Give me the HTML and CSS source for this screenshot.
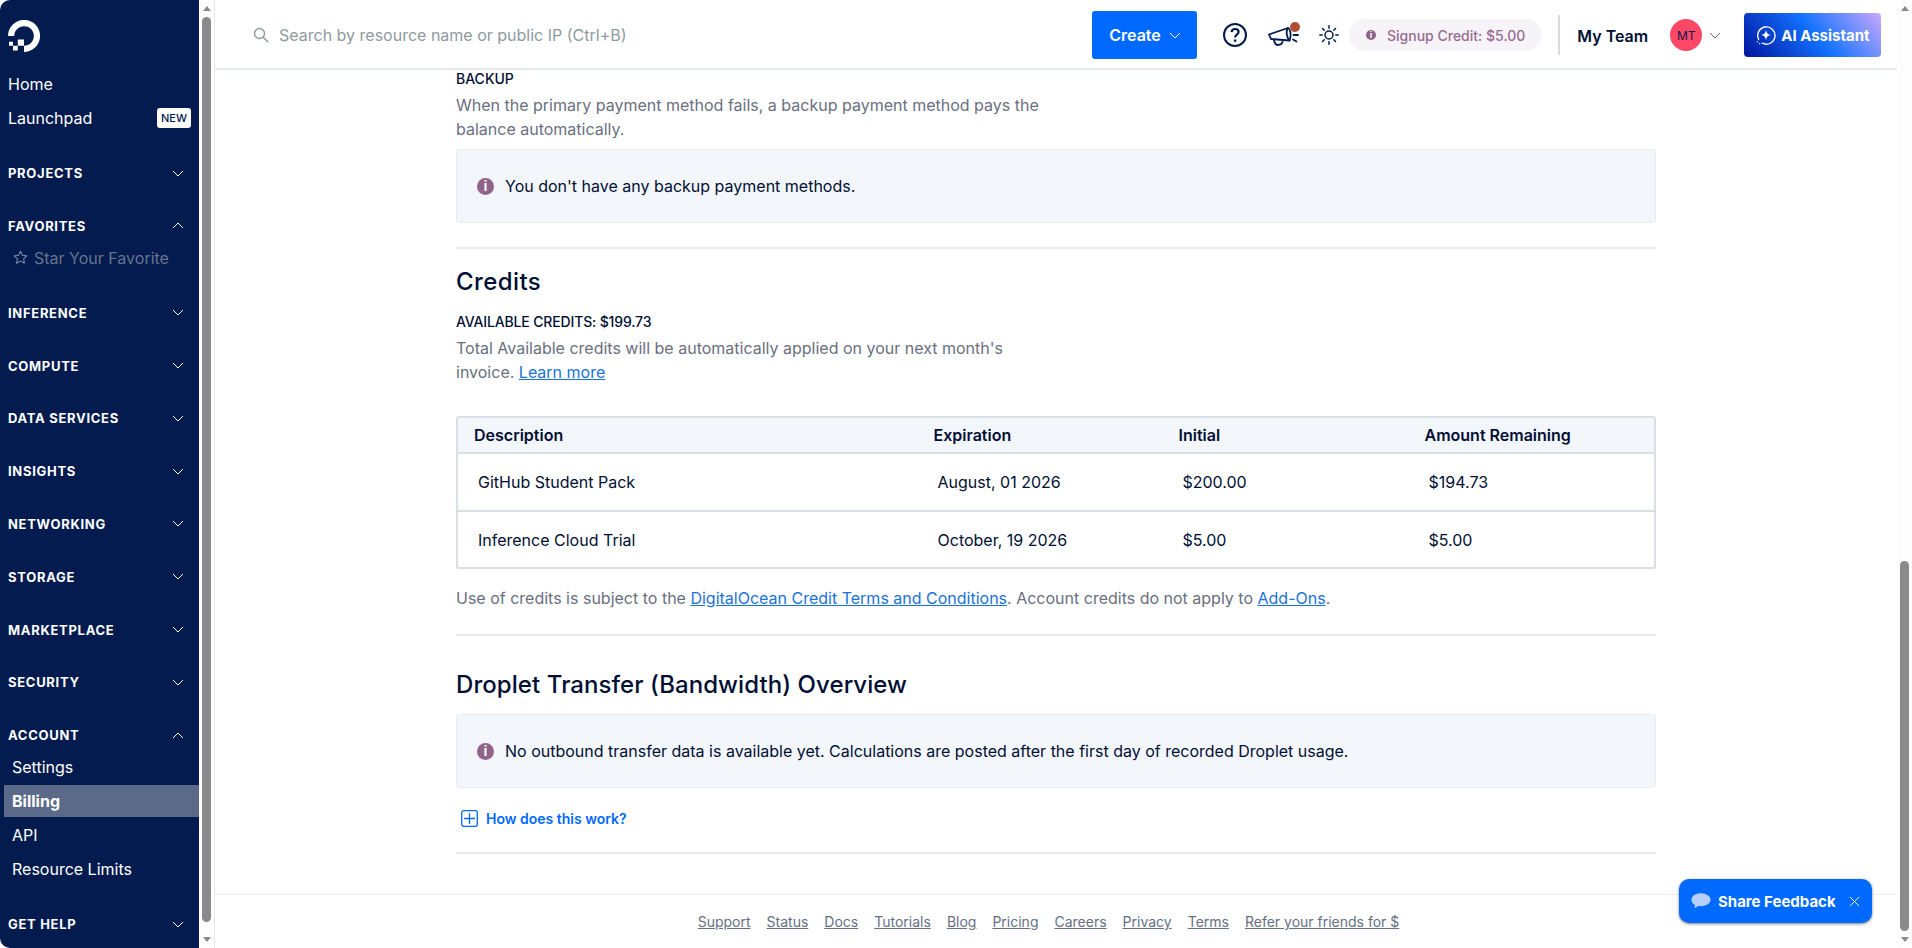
FILE: index.html
```html
<!DOCTYPE html>
<html lang="en">
<head>
    <meta charset="UTF-8">
    <title>Billing</title>
    <link rel="stylesheet" href="styles.css">
</head>
<body>
    <aside class="sidebar">
        <svg class="logo" viewBox="0 0 32 32" width="32" height="32">
            <path d="M16 32v-6.2c6.6 0 11.7-6.5 9.2-13.4-.9-2.6-3-4.600-5.600-5.600C12.700 4.300 6.200 9.400 6.200 16H0C0 5.500 10.100-2.700 21.100.7c4.800 1.500 8.700 5.300 10.200 10.200C34.700 21.900 26.500 32 16 32z" fill="#fff"/>
            <path d="M16 25.800H9.800V19.600H16zM9.800 30.600H5V25.800h4.800zM5 25.800H1V21.800h4z" fill="#fff"/>
        </svg>
        <a class="nav-top">Home</a>
        <a class="nav-top">Launchpad <span class="new-tag">NEW</span></a>

        <div class="nav-head first">PROJECTS <svg class="chev" viewBox="0 0 12 7"><path d="M1 1l5 5 5-5"/></svg></div>
        <div class="nav-head">FAVORITES <svg class="chev" viewBox="0 0 12 7"><path d="M1 6l5-5 5 5"/></svg></div>
        <a class="nav-sub muted">
            <svg class="star" viewBox="0 0 14 14" width="15" height="15" fill="none" stroke="#7d8aa6" stroke-width="1" stroke-linejoin="round"><path d="M7 1.200l1.800 3.700 4 .6-2.900 2.800.7 4L7 10.400l-3.600 1.900.7-4L1.200 5.500l4-.6z"/></svg>
            Star Your Favorite
        </a>
        <div class="nav-head after-sub">INFERENCE <svg class="chev" viewBox="0 0 12 7"><path d="M1 1l5 5 5-5"/></svg></div>
        <div class="nav-head">COMPUTE <svg class="chev" viewBox="0 0 12 7"><path d="M1 1l5 5 5-5"/></svg></div>
        <div class="nav-head">DATA SERVICES <svg class="chev" viewBox="0 0 12 7"><path d="M1 1l5 5 5-5"/></svg></div>
        <div class="nav-head">INSIGHTS <svg class="chev" viewBox="0 0 12 7"><path d="M1 1l5 5 5-5"/></svg></div>
        <div class="nav-head">NETWORKING <svg class="chev" viewBox="0 0 12 7"><path d="M1 1l5 5 5-5"/></svg></div>
        <div class="nav-head">STORAGE <svg class="chev" viewBox="0 0 12 7"><path d="M1 1l5 5 5-5"/></svg></div>
        <div class="nav-head">MARKETPLACE <svg class="chev" viewBox="0 0 12 7"><path d="M1 1l5 5 5-5"/></svg></div>
        <div class="nav-head">SECURITY <svg class="chev" viewBox="0 0 12 7"><path d="M1 1l5 5 5-5"/></svg></div>
        <div class="nav-head">ACCOUNT <svg class="chev" viewBox="0 0 12 7"><path d="M1 6l5-5 5 5"/></svg></div>
        <a class="nav-sub">Settings</a>
        <a class="nav-sub active">Billing</a>
        <a class="nav-sub">API</a>
        <a class="nav-sub">Resource Limits</a>
        <div class="nav-head after-sub">GET HELP <svg class="chev" viewBox="0 0 12 7"><path d="M1 1l5 5 5-5"/></svg></div>
    </aside>

    <div class="scrollbar side-scroll">
        <span class="arrow up"></span>
        <span class="track"><span class="thumb"></span></span>
        <span class="arrow down"></span>
    </div>

    <div class="main">
        <header class="topbar">
            <div class="search">
                <svg viewBox="0 0 16 16" width="16" height="16" fill="none" stroke="#8e9a9e" stroke-width="1.4"><circle cx="6.500" cy="6.500" r="5"/><path d="M10.200 10.200l5 5"/></svg>
                Search by resource name or public IP (Ctrl+B)
            </div>
            <button class="create">Create <svg class="chev" viewBox="0 0 12 7"><path d="M1 1l5 5 5-5"/></svg></button>
            <svg class="help" viewBox="0 0 24 24" width="24" height="24" fill="none" stroke="#031b4e" stroke-width="2"><circle cx="12" cy="12" r="11"/><path d="M8.600 9.200c.2-2 1.700-3.200 3.500-3.200 2 0 3.500 1.300 3.500 3 0 2.600-3.500 2.800-3.500 5.400" stroke-width="2.200"/><path d="M12.100 16.500v2.300" stroke-width="2.400"/></svg>
            <span class="announce">
                <svg viewBox="0 0 32 24" width="32" height="24" fill="none" stroke="#031b4e" stroke-width="1.800" stroke-linejoin="round" stroke-linecap="round"><path d="M1 11.500l19-6.500c2.500 1 3.500 8 1.500 12.500L3 16z"/><path d="M6 17c.5 3 1.500 5 4 5 2.500 0 4-1.200 4.600-3.200"/><path d="M20 5c-2 2-2 9 1.500 12.500"/><path d="M25 7.500l4-1M25.500 12h4.500M25 16.500l3.500 2"/></svg>
                <span class="dot"></span>
            </span>
            <svg class="sun" viewBox="0 0 20 20" width="20" height="20" fill="none" stroke="#031b4e" stroke-width="1.500" stroke-linecap="round"><circle cx="10" cy="10" r="4"/><path d="M10 .8v2.400M10 16.800v2.400M.8 10h2.400M16.800 10h2.400M3.500 3.500l1.700 1.700M14.800 14.800l1.700 1.700M3.500 16.500l1.700-1.700M14.800 5.200l1.700-1.700"/></svg>
            <span class="credit-pill"><span class="info small">i</span> Signup Credit: $5.00</span>
            <span class="divider"></span>
            <span class="team">My Team</span>
            <span class="avatar">MT</span>
            <svg class="chev dark" viewBox="0 0 12 7"><path d="M1 1l5 5 5-5"/></svg>
            <button class="ai">
                <svg viewBox="0 0 22 22" width="20" height="20" fill="none" stroke="#fff" stroke-width="1.500"><path d="M3 16A9.500 9.500 0 1 1 7 20" stroke-linecap="round"/><path d="M11 5.500c.5 3.300 2 5 5.500 5.500-3.500.5-5 2.200-5.500 5.500-.5-3.300-2-5-5.500-5.500 3.500-.5 5-2.200 5.500-5.500z" fill="#fff" stroke="none"/><path d="M1.500 18.500h.1M4 20.500h.1" stroke-linecap="round"/></svg>
                AI Assistant
            </button>
        </header>

        <div class="content">
            <section class="wrap">
                <h4 class="label">BACKUP</h4>
                <p class="desc">When the primary payment method fails, a backup payment method pays the balance automatically.</p>
                <div class="notice"><span class="info">i</span> You don't have any backup payment methods.</div>
                <hr class="rule">

                <h2 class="credits-title">Credits</h2>
                <h4 class="label tight">AVAILABLE CREDITS: $199.73</h4>
                <p class="desc">Total Available credits will be automatically applied on your next month's invoice. <a href="#">Learn more</a></p>

                <div class="table">
                    <div class="row head"><span>Description</span><span>Expiration</span><span>Initial</span><span>Amount Remaining</span></div>
                    <div class="row"><span>GitHub Student Pack</span><span>August, 01 2026</span><span>$200.00</span><span>$194.73</span></div>
                    <div class="row"><span>Inference Cloud Trial</span><span>October, 19 2026</span><span>$5.00</span><span>$5.00</span></div>
                </div>

                <p class="terms">Use of credits is subject to the <a href="#">DigitalOcean Credit Terms and Conditions</a>. Account credits do not apply to <a href="#">Add-Ons</a>.</p>
                <hr class="rule rule-two">

                <h2 class="transfer-title">Droplet Transfer (Bandwidth) Overview</h2>
                <div class="notice"><span class="info">i</span> No outbound transfer data is available yet. Calculations are posted after the first day of recorded Droplet usage.</div>
                <div class="how">
                    <svg viewBox="0 0 17 17" width="17" height="17" fill="none" stroke="#0069ff" stroke-width="1.300"><rect x=".7" y=".7" width="15.600" height="15.600" rx="2"/><path d="M8.500 3v11M3 8.500h11"/></svg>
                    How does this work?
                </div>
                <hr class="rule rule-three">
            </section>

            <footer class="footer">
                <a>Support</a><a>Status</a><a>Docs</a><a>Tutorials</a><a>Blog</a><a>Pricing</a><a>Careers</a><a>Privacy</a><a>Terms</a><a>Refer your friends for $</a>
            </footer>
        </div>
    </div>

    <div class="scrollbar page-scroll">
        <span class="arrow up"></span>
        <span class="track"><span class="thumb"></span></span>
        <span class="arrow down"></span>
    </div>

    <div class="feedback">
        <svg viewBox="0 0 22 18" width="20" height="17"><path d="M11 0C5 0 .5 3 .5 7.200c0 2.400 1.500 4.400 3.800 5.700l-.5 3.600 4.400-2.600c.9.1 1.800.2 2.800.2 6 0 10.500-3 10.500-6.900S17 0 11 0z" fill="#b5d0fb"/></svg>
        Share Feedback
        <svg class="close" viewBox="0 0 12 12" width="11" height="11" fill="none" stroke="#fff" stroke-width="1"><path d="M1 1l10 10M11 1L1 11"/></svg>
    </div>
</body>
</html>
```

FILE: styles.css
```css
* {
    margin: 0;
    padding: 0;
    box-sizing: border-box;
}

html, body {
    height: 100%;
    overflow: hidden;
}

body {
    font-family: Inter, "Liberation Sans", sans-serif;
    background-color: #fff;
    color: #031b4e;
    display: flex;
    font-size: 16px;
}

a {
    color: inherit;
}

/* sidebar */
.sidebar {
    width: 199px;
    flex: none;
    height: 948px;
    background-color: #031b4e;
    color: #fff;
    border-radius: 10px 0 0 10px;
    padding-top: 20px;
}

.logo {
    display: block;
    margin-left: 8px;
    margin-bottom: 15px;
}

.nav-top {
    display: flex;
    align-items: center;
    justify-content: space-between;
    height: 34px;
    padding: 0 8px;
    font-size: 16px;
}

.new-tag {
    background-color: #fff;
    color: #031b4e;
    font-size: 11px;
    font-weight: 500;
    padding: 3px 4px;
    border-radius: 3px;
    line-height: 14px;
}

.nav-head {
    display: flex;
    align-items: center;
    justify-content: space-between;
    height: 20px;
    margin-top: 32.8px;
    padding: 0 15px 0 8px;
    font-size: 13px;
    font-weight: 700;
    letter-spacing: 0.7px;
}

.nav-head.first {
    margin-top: 28px;
}

.nav-head.after-sub {
    margin-top: 28px;
}

.nav-sub {
    display: flex;
    align-items: center;
    height: 34px;
    margin-left: 4px;
    padding-left: 8px;
    font-size: 16px;
}

.nav-head + .nav-sub {
    margin-top: 5px;
}

.nav-sub.muted {
    color: #66758f;
}

.star {
    flex: none;
    margin: 0 6px 0 1px;
}

.nav-sub.active {
    height: 32px;
    margin-top: 1px;
    margin-bottom: 1px;
    background-color: #5b6a88;
    font-weight: 700;
}

.chev {
    width: 12px;
    height: 7px;
    fill: none;
    stroke: #fff;
    stroke-width: 1;
}

.chev.dark {
    stroke: #5b6a88;
}

/* scrollbars */
.scrollbar {
    width: 16px;
    flex: none;
    height: 948px;
    display: flex;
    flex-direction: column;
    align-items: center;
    background-color: #fff;
}

.side-scroll {
    border-right: 1px solid #e5e8ed;
}

.page-scroll {
    width: 15px;
    background-color: #fdfdfd;
}

.track {
    flex: 1;
    width: 100%;
    display: flex;
    flex-direction: column;
    align-items: center;
}

.arrow {
    width: 0;
    height: 0;
    margin: 6px 0;
    border-left: 4px solid transparent;
    border-right: 4px solid transparent;
}

.arrow.up {
    border-bottom: 5px solid #8a8a8a;
}

.arrow.down {
    border-top: 5px solid #8a8a8a;
}

.thumb {
    width: 9px;
    background-color: #8a8a8a;
    border-radius: 5px;
}

.side-scroll .thumb {
    height: 905px;
}

.page-scroll .track {
    justify-content: flex-end;
}

.page-scroll .thumb {
    height: 370px;
}

/* top bar */
.main {
    flex: 1;
    min-width: 0;
    height: 948px;
    overflow: hidden;
    display: flex;
    flex-direction: column;
}

.topbar {
    flex: none;
    height: 70px;
    padding-top: 2px;
    padding-left: 38px;
    border-bottom: 2px solid #e5e8ed;
    display: flex;
    align-items: center;
}

.search {
    display: flex;
    align-items: center;
    gap: 10px;
    width: 839px;
    font-size: 16px;
    color: #8e9a9e;
}

.create {
    width: 105px;
    height: 48px;
    padding-left: 1px;
    background-color: #0069ff;
    color: #fff;
    border: none;
    border-radius: 3px;
    font-family: inherit;
    font-size: 16px;
    font-weight: 600;
    display: flex;
    align-items: center;
    justify-content: center;
    gap: 8px;
}

.help {
    margin-left: 26px;
}

.announce {
    position: relative;
    display: block;
    height: 24px;
    margin-left: 21px;
}

.dot {
    position: absolute;
    top: -1px;
    right: 0;
    width: 10px;
    height: 10px;
    border-radius: 50%;
    background-color: #ae4f34;
}

.sun {
    margin-left: 19px;
}

.credit-pill {
    display: flex;
    align-items: center;
    gap: 11px;
    height: 32px;
    margin-left: 10px;
    padding: 0 17px;
    border-radius: 16px;
    background-color: #f6f4f9;
    color: #986b91;
    font-size: 14px;
    font-weight: 500;
}

.info {
    flex: none;
    display: inline-flex;
    align-items: center;
    justify-content: center;
    width: 17px;
    height: 17px;
    border-radius: 50%;
    background-color: #90648a;
    color: #fff;
    font-size: 14px;
    font-weight: 700;
    font-family: "Liberation Sans", sans-serif;
}

.info.small {
    width: 10px;
    height: 10px;
    font-size: 9px;
}

.divider {
    width: 2px;
    height: 40px;
    margin-left: 16px;
    background-color: #d5dadd;
}

.team {
    margin-left: 17px;
    margin-top: 2px;
    font-size: 16px;
    font-weight: 600;
    color: #000f33;
}

.avatar {
    display: flex;
    align-items: center;
    justify-content: center;
    width: 32px;
    height: 32px;
    margin-left: 22px;
    border-radius: 50%;
    background-color: #ff4766;
    font-size: 12px;
    color: #031b4e;
}

.avatar + .chev {
    margin-left: 7px;
}

.ai {
    display: flex;
    align-items: center;
    gap: 5px;
    width: 137px;
    height: 44px;
    margin-left: 23px;
    padding-left: 12px;
    border: none;
    border-radius: 4px;
    background: linear-gradient(50deg, #00149e 0%, #1272ff 52%, #c9a9fb 100%);
    color: #fff;
    font-family: inherit;
    font-size: 15px;
    font-weight: 700;
}

/* content */
.content {
    flex: 1;
    overflow: hidden;
}

.wrap {
    width: 1200px;
    margin-left: 241px;
}

.label {
    font-size: 14px;
    font-weight: 500;
    line-height: 18px;
    color: #000f33;
}

.label.tight {
    letter-spacing: -0.15px;
}

.desc {
    width: 600px;
    margin-top: 5px;
    font-size: 16px;
    line-height: 24px;
    color: #6a7080;
}

.desc a, .terms a {
    color: #1a73d9;
    text-decoration: underline;
}

.notice {
    display: flex;
    align-items: center;
    gap: 11px;
    height: 74px;
    margin-top: 8px;
    padding-left: 20px;
    background-color: #f3f6fb;
    border: 1px solid #e9edf2;
    border-radius: 3px;
    font-size: 16px;
    color: #000f33;
}

.rule {
    border: none;
    height: 2px;
    margin-top: 24px;
    background-color: #ecedef;
}

h2 {
    font-size: 24px;
    font-weight: 500;
    color: #000f33;
}

.credits-title {
    margin-top: 17px;
    line-height: 32px;
    letter-spacing: 0.4px;
}

.credits-title + .label {
    margin-top: 15px;
}

.table {
    margin-top: 32px;
    border: 2px solid #d9dfe2;
    border-radius: 3px;
}

.row {
    display: grid;
    grid-template-columns: 459.5px 245px 246px 1fr;
    height: 58px;
    align-items: center;
    padding-left: 20px;
    font-size: 16px;
    color: #000f33;
    border-top: 2px solid #d9dfe2;
}

.row:last-child {
    height: 57px;
}

.row.head {
    height: 34px;
    padding-left: 16px;
    background-color: #f3f6fb;
    border-top: none;
    font-weight: 600;
}

.terms {
    margin-top: 17px;
    font-size: 16px;
    line-height: 24px;
    color: #6a7080;
}

.rule-two {
    margin-top: 24px;
}

.transfer-title {
    margin-top: 33px;
    line-height: 32px;
    letter-spacing: 0.07px;
}

.transfer-title + .notice {
    margin-top: 13px;
}

.how {
    display: flex;
    align-items: center;
    gap: 8px;
    margin-top: 22px;
    padding-left: 5px;
    font-size: 14px;
    font-weight: 600;
    color: #0069ff;
}

.rule-three {
    margin-top: 25px;
}

.footer {
    display: flex;
    justify-content: center;
    gap: 16px;
    height: 54px;
    margin-top: 40px;
    padding-top: 18px;
    padding-right: 15px;
    border-top: 1px solid #ecedef;
    font-size: 14px;
    color: #667085;
}

.footer a {
    text-decoration: underline;
}

/* floating feedback button */
.feedback {
    position: absolute;
    left: 1679px;
    top: 879px;
    width: 193px;
    height: 44px;
    display: flex;
    align-items: center;
    gap: 7px;
    padding-left: 12px;
    background-color: #0069ff;
    border-radius: 10px;
    box-shadow: 0 1px 3px rgba(0, 0, 0, 0.5);
    color: #fff;
    font-size: 15px;
    font-weight: 700;
}

.close {
    margin-left: 6px;
}
```
